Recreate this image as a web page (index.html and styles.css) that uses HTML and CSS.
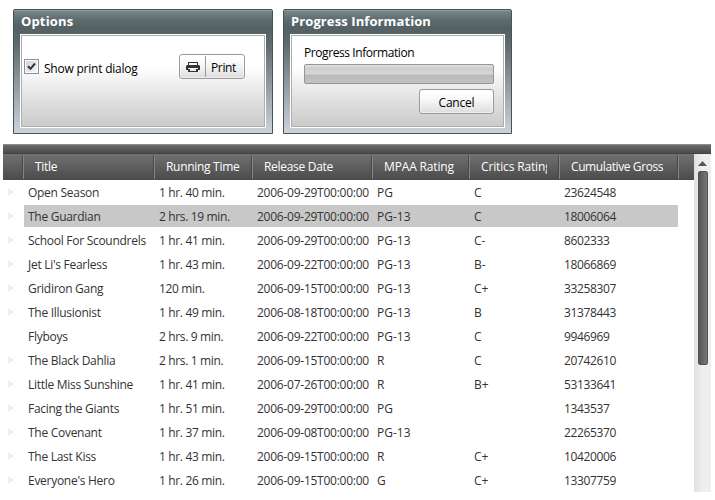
FILE: index.html
```html
<!DOCTYPE html>
<html lang="en">
<head>
<meta charset="utf-8">
<title>Movies</title>
<link rel="stylesheet" href="styles.css">
</head>
<body>
<div class="panels">
  <section class="panel options">
    <h2>Options</h2>
    <div class="content options-row">
      <span class="check"><svg width="9" height="9" viewBox="0 0 9 9"><path d="M1 4.2L3.5 6.8L8 1.5" fill="none" stroke="#333" stroke-width="2"/></svg></span>
      <span class="check-label">Show print dialog</span>
      <button class="btn print"><span class="print-icon"><svg width="14" height="10" viewBox="0 0 14 10"><path d="M2 0h10v3h-1V1H3v2H2z M1 3h12l1 1v4h-2V6H2v2H0V4z M2 7h10v3H2z" fill="#333"/><path d="M4 7h6v2H4z" fill="#eee"/></svg></span><span class="print-text">Print</span></button>
    </div>
  </section>
  <section class="panel progress">
    <h2>Progress Information</h2>
    <div class="content">
      <div class="progress-label"><span>Progress Information</span></div>
      <div class="bar"></div>
      <button class="btn cancel">Cancel</button>
    </div>
  </section>
</div>
<div class="grid">
  <div class="group"></div>
  <div class="main">
    <div class="table">
      <div class="row head"><span></span><span>Title</span><span>Running Time</span><span>Release Date</span><span>MPAA Rating</span><span><b>Critics Rating</b></span><span>Cumulative Gross</span><span></span></div>
      <div class="rows" id="rows"></div>
    </div>
    <div class="scroll">
      <svg width="9" height="5" viewBox="0 0 9 5"><path d="M0 5L4.5 0L9 5z" fill="#555"/></svg>
      <div class="thumb"></div>
    </div>
  </div>
</div>
<script src="script.js"></script>
</body>
</html>
```
FILE: styles.css
```css
* { box-sizing: border-box; }
body { margin: 0; width: 715px; height: 500px; overflow: hidden; background: #fff; font: 12px/18px "Open Sans", "Noto Sans", sans-serif; color: #000; }
.panels { display: flex; gap: 10px; padding: 9px 0 0 13px; height: 144px; }
.panel { height: 125px; border: 1px solid #465459; border-radius: 2px 2px 0 0; padding: 0 6px 6px; background: linear-gradient(#7c8889 0, #5d6b6e 10px, #536165 18px, #5c686c 32px, #cdd2dc 100%); box-shadow: inset 0 1px #919b9b; }
.options { width: 260px; }
.progress { width: 229px; }
.panel h2 { margin: 0; height: 24px; padding-left: 1px; font-size: 13px; line-height: 23px; font-weight: 700; color: #fff; white-space: nowrap; letter-spacing: .15px; }
.progress h2 { letter-spacing: .1px; }
.content { height: 94px; border: 1px solid #fff; outline: 1px solid #adadad; outline-offset: -2px; background: linear-gradient(#fff 36%, #f1f1f1 50%, #c9c9c9 100%); }
.options-row { display: flex; align-items: flex-start; padding: 19px 0 0 3px; }
.check { width: 15px; height: 15px; margin-top: 5px; border: 1px solid #8a9299; outline: 1px solid #fff; outline-offset: -2px; background: linear-gradient(135deg, #c9d0d8, #fafafa); display: flex; align-items: center; justify-content: center; }
.check-label { width: 135px; margin: 5px 0 0 5px; line-height: 19px; letter-spacing: -.22px; }
.btn { margin: 0; padding: 0; border: 1px solid #999; border-radius: 3px; background: linear-gradient(#fff 15%, #f4f4f4 50%, #ddd); box-shadow: inset 0 0 0 1px #fff8; color: #000; font: inherit; letter-spacing: -.2px; }
.print { display: flex; width: 66px; height: 25px; }
.print-icon { width: 26px; height: 21px; margin-top: 1px; border-right: 1px solid #999; display: flex; align-items: center; justify-content: center; }
.print-text { padding: 3px 0 0 5px; line-height: 20px; letter-spacing: -.35px; }
.progress .content { padding: 8px 10px 0 13px; }
.progress-label { height: 21px; line-height: 20px; letter-spacing: -.42px; }
.bar { height: 20px; border: 1px solid #969696; border-radius: 2px; background: linear-gradient(#dedede 0 1px, #cecece 3px, #d6d6d6 9px, #bababa 10px, #c2c2c2); }
.cancel { display: block; width: 75px; height: 25px; margin: 5px 0 0 auto; padding-top: 2px; }
.grid { width: 708px; margin-left: 3px; }
.group { height: 10px; border-top: 1px solid #8d8d8d; border-bottom: 1px solid #424242; background: linear-gradient(#6b6b6b, #4c4c4c); }
.main { display: flex; height: 338px; }
.table { width: 691px; }
.row { display: grid; grid-template-columns: 21px 131px 98px 120px 97px 90px 118px 1fr; height: 24px; align-items: center; color: #333; white-space: nowrap; }
.head { height: 26px; padding: 1px 0; background: linear-gradient(#717171, #4b4b4b); color: #fff; align-items: stretch; grid-template-columns: 20px 131px 98px 120px 97px 90px 119px 1fr; }
.head span { padding-left: 12px; border-right: 1px solid #4a4a4a; box-shadow: 1px 0 #858585; line-height: 24px; letter-spacing: -.3px; }
.head span:nth-child(7) { letter-spacing: -.4px; }
.head span:nth-child(5) { letter-spacing: -.15px; }
.head span:nth-child(8) { border: 0; box-shadow: none; }
.head b { display: block; width: 66px; overflow: hidden; font-weight: 400; letter-spacing: -.15px; }
.rows { padding-top: 1px; }
.rows .row span { padding-left: 4px; height: 22px; line-height: 24px; margin-bottom: 2px; }
.rows .row .c0 { letter-spacing: -.28px; }
.rows .row .c1 { letter-spacing: -.35px; }
.rows .row .c2 { letter-spacing: -.25px; }
.rows .row .c5 { letter-spacing: -.37px; }
.rows .row span.marker { padding: 7px 0 0 5px; line-height: 0; }
.selected span:not(.marker):not(:last-child) { background: #c8c8c8; }
.scroll { width: 17px; background: linear-gradient(90deg, #e0e0e0, #eee 50%); display: flex; flex-direction: column; align-items: center; padding-top: 7px; }
.thumb { width: 10px; height: 194px; margin: 5px 0 0 1px; border-radius: 2px; border: 1px solid #555; background: linear-gradient(90deg, #555, #777); }
```
FILE: script.js
```js
const movies = [
  ["Open Season", "1 hr. 40 min.", "2006-09-29", "PG", "C", "23624548"],
  ["The Guardian", "2 hrs. 19 min.", "2006-09-29", "PG-13", "C", "18006064"],
  ["School For Scoundrels", "1 hr. 41 min.", "2006-09-29", "PG-13", "C-", "8602333"],
  ["Jet Li's Fearless", "1 hr. 43 min.", "2006-09-22", "PG-13", "B-", "18066869"],
  ["Gridiron Gang", "120 min.", "2006-09-15", "PG-13", "C+", "33258307"],
  ["The Illusionist", "1 hr. 49 min.", "2006-08-18", "PG-13", "B", "31378443"],
  ["Flyboys", "2 hrs. 9 min.", "2006-09-22", "PG-13", "C", "9946969"],
  ["The Black Dahlia", "2 hrs. 1 min.", "2006-09-15", "R", "C", "20742610"],
  ["Little Miss Sunshine", "1 hr. 41 min.", "2006-07-26", "R", "B+", "53133641"],
  ["Facing the Giants", "1 hr. 51 min.", "2006-09-29", "PG", "", "1343537"],
  ["The Covenant", "1 hr. 37 min.", "2006-09-08", "PG-13", "", "22265370"],
  ["The Last Kiss", "1 hr. 43 min.", "2006-09-15", "R", "C+", "10420006"],
  ["Everyone's Hero", "1 hr. 26 min.", "2006-09-15", "G", "C+", "13307759"]
];
const arrow = '<svg width="6" height="8" viewBox="0 0 6 8"><path d="M0 0L6 4L0 8z" fill="#eee"/></svg>';
document.getElementById("rows").innerHTML = movies.map((m, i) => {
  const cells = m.map((t, c) => `<span class="c${c}">${c === 2 ? t + "T00:00:00" : t}</span>`).join("");
  const marker = m[0] === "Flyboys" ? "" : arrow;
  return `<div class="row${i === 1 ? " selected" : ""}"><span class="marker">${marker}</span>${cells}<span></span></div>`;
}).join("");
```
